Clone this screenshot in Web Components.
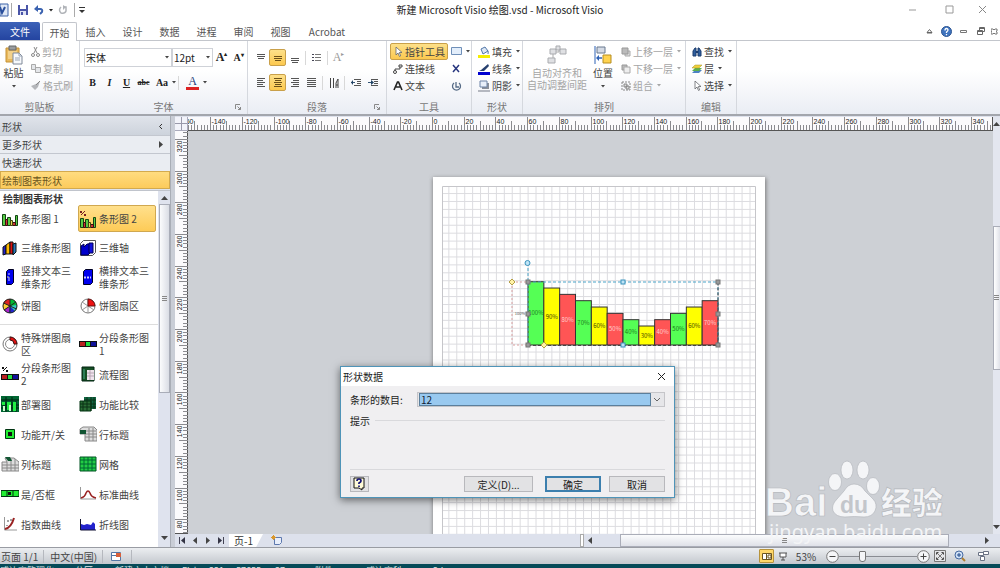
<!DOCTYPE html>
<html lang="zh-CN">
<head>
<meta charset="utf-8">
<title>新建 Microsoft Visio 绘图.vsd - Microsoft Visio</title>
<style>
html,body{margin:0;height:100%}
body{font:10px/13px "Noto Sans CJK SC","Noto Sans",sans-serif;color:#444;overflow:hidden;background:#fff}
</style>
</head>
<body>
<visio-app></visio-app>
<script>
const ICONS = {
  // window and quick access
  visio:[9,14,'<path d="M0 1h8v12H0z" fill="#dfe8f6" stroke="#3d62a8"/><path d="M0 4l2 6 3-6" fill="none" stroke="#2a4f9c" stroke-width="2"/>'],
  save:[10,10,'<path d="M0 0h10v10H0z" fill="#4a55a8"/><path d="M2 0h6v4H2z" fill="#fff"/><path d="M2 6h6v4H2z" fill="#dfe3f5"/><path d="M3 7h2v3H3z" fill="#4a55a8"/>'],
  undo:[10,10,'<path d="M2 4h4q3 0 2 3l-2 2" fill="none" stroke="#3a62b0" stroke-width="2"/><path d="M0 4l4-4v7z" fill="#3a62b0"/>'],
  redo:[10,10,'<path d="M3 2Q0 5 3 8q4 1 5-2V2H5" fill="none" stroke="#b0b3b8" stroke-width="1.500"/><path d="M5 0v5L8 2z" fill="#b0b3b8"/>'],
  qat:[6,6,'<path d="M0 .5h6" stroke="#333"/><path d="M0 3h6L3 6z" fill="#333"/>'],
  caret:[4,3,'<path d="M0 0h4L2 2.500z" fill="currentColor"/>'],
  min:[9,9,'<path d="M1 5h7" stroke="#999"/>'],
  max:[9,9,'<path d="M1 1h7v7H1z" fill="none" stroke="#999"/>'],
  close:[9,9,'<path d="M1 1l7 7M8 1l-7 7" stroke="#888"/>'],
  xdark:[9,9,'<path d="M1 1l7 7M8 1l-7 7" stroke="#222"/>'],
  up:[7,6,'<path d="M1 4.500l2.500-3 2.500 3zM1 5h5" fill="none" stroke="#666"/>'],
  help:[11,11,'<circle cx="5.500" cy="5.500" r="5" fill="#3f74bf" stroke="#2d5591"/><path d="M4 4.500q0-2 1.500-2t1.500 1.500q0 1-1.500 2V7M5.500 8v1.200" stroke="#fff" fill="none" stroke-width="1.300"/>'],
  mdimin:[8,6,'<path d="M.5 2.500h6v2h-6z" fill="#fff" stroke="#777"/>'],
  mdires:[8,8,'<path d="M2.500.5h5v4h-5zM.5 3.500h5v4h-5zM.5 4.500h5M2.500 1.500h5" fill="#fff" stroke="#666"/>'],
  mdiclose:[7,7,'<path d="M0 1h2l1 1 1-1h2v2L5 3.500 6 4v2H4L3 5 2 6H0V4l1-.5L0 3z" fill="#fff" stroke="#777"/>'],
  // clipboard
  paste:[18,20,'<path d="M1 3h13v14H1z" fill="#e9b95c" stroke="#c69235"/><path d="M4 1h7v4H4z" fill="#999c9f" stroke="#666"/><path d="M3 6h9v8H3z" fill="#f3d18a"/><path d="M8 8h6l3 3v8H8z" fill="#f7f9fc" stroke="#7e8898"/><path d="M14 8v3h3M10 13h5M10 15h5" fill="none" stroke="#9aa5b5"/>'],
  cut:[9,10,'<path d="M3 0l3 6M6 0L3 6" stroke="#888"/><circle cx="2" cy="8" r="1.500" fill="none" stroke="#888"/><circle cx="7" cy="8" r="1.500" fill="none" stroke="#888"/>'],
  copy:[10,9,'<path d="M.5.5h4v5h-4zM4.500 3.500h5v5h-5z" fill="#e5e7ea" stroke="#aaa"/>'],
  brush:[10,9,'<path d="M9 0L5 3 0 5l4 4 3-3z" fill="#b4b6ba"/><path d="M9 0L5 4" stroke="#888"/>'],
  // paragraph
  top:[10,10,'<path d="M1 1.500h8M1 3.500h8M2 5.500h6" stroke="#555"/>'],
  mid:[10,10,'<path d="M1 3.500h8M1 5.500h8M2 7.500h6" stroke="#6b5018"/>'],
  bot:[10,10,'<path d="M1 5.500h8M1 7.500h8M2 9.500h6" stroke="#555"/>'],
  left:[10,9,'<path d="M1 .5h8M1 2.500h6M1 4.500h8M1 6.500h6M1 8.500h8" stroke="#555"/>'],
  center:[10,9,'<path d="M1 .5h8M2 2.500h6M1 4.500h8M2 6.500h6M1 8.500h8" stroke="#6b5018"/>'],
  right:[10,9,'<path d="M1 .5h8M3 2.500h6M1 4.500h8M3 6.500h6M1 8.500h8" stroke="#555"/>'],
  just:[10,9,'<path d="M0 .5h9M0 2.500h9M0 4.500h9M0 6.500h9M0 8.500h9" stroke="#555"/>'],
  list:[9,9,'<path d="M3 1.500h6M3 4.500h6M3 7.500h6" stroke="#777"/><path d="M0 1.500h2M0 4.500h2M0 7.500h2" stroke="#445"/>'],
  vert:[10,10,'<path d="M1.500 0v10M4.500 0v10M7 10V5l2-4v9M7 7h2" stroke="#444" fill="none"/>'],
  outd:[10,9,'<path d="M3 1.500h7M6 3.500h4M6 5.500h4M3 7.500h7" stroke="#555"/><path d="M0 4.500h4" stroke="#357"/><path d="M2 2v5L0 4.500z" fill="#246"/>'],
  ind:[10,9,'<path d="M3 1.500h7M6 3.500h4M6 5.500h4M3 7.500h7" stroke="#555"/><path d="M0 4.500h4" stroke="#357"/><path d="M3 2v5l3-2.500z" fill="#246"/>'],
  // tools
  pointer:[10,10,'<path d="M3 0v8l2-2 1.500 3.500 1.200-.6L6.300 5.500H9z" fill="#fff" stroke="#66686c" stroke-width=".8"/>'],
  conn:[10,10,'<path d="M2 8V5h5V2" fill="none" stroke="#444"/><circle cx="2" cy="8" r="1.500" fill="#fff" stroke="#444"/><path d="M6 1h3v2H6z" fill="#fff" stroke="#444"/>'],
  text:[10,10,'<path d="M1 9l3.500-8h1L9 9M3 6h4" fill="none" stroke="#222" stroke-width="1.600"/>'],
  rect:[11,9,'<path d="M.5.5h10v7H.5z" fill="#e3eefb" stroke="#6f8fb8"/>'],
  cross:[11,9,'<path d="M2 1l6 7M8 1L2 8" stroke="#27367f" stroke-width="1.500"/>'],
  rotate:[11,10,'<path d="M8 2a4 4 0 1 1-5 0M5 1v5h3" fill="none" stroke="#566b86" stroke-width="1.300"/>'],
  fill:[12,12,'<path d="M3 3l4-2 3 4-5 3z" fill="#dde8f5" stroke="#5277a8"/><path d="M9 4q2 1 1 4" stroke="#5277a8" fill="none"/><path d="M0 9h12v3H0z" fill="#f5ee00"/>'],
  line:[12,12,'<path d="M10 1L3 7l-2 1 5 0 5-5z" fill="#27406f"/><path d="M0 9h12v3H0z" fill="#0000d0"/>'],
  shadow:[12,12,'<path d="M4 3h7v6H4z" fill="#8a8f99"/><path d="M2 1h7v6H2z" fill="#e8effa" stroke="#6d83a6"/><path d="M0 10h12v2H0z" fill="#b5b8c0"/>'],
  auto:[20,20,'<path d="M6 7h6M6 9v5M12 7V3" fill="none" stroke="#aaa"/><path d="M3 4h6v5H3zM1 13h7v5H1zM13 4h6v5h-6zM9 1h4v4H9z" fill="#dfe0e3" stroke="#a9abaf"/>'],
  pos:[18,20,'<path d="M1 1v18" stroke="#2f62b5"/><path d="M3 2h8v6H3z" fill="#d5dbe5" stroke="#69798f"/><path d="M3 13h5" stroke="#2f62b5" stroke-width="1.500"/><path d="M2 13l3-3v6z" fill="#2f62b5"/><path d="M9 10h8v8H9z" fill="#ffd34f" stroke="#b58d22"/>'],
  front:[10,10,'<path d="M4 4h5v5H4z" fill="#ddd" stroke="#aaa"/><path d="M1 1h6v6H1z" fill="#bbb" stroke="#999"/>'],
  back:[10,10,'<path d="M1 1h5v5H1z" fill="#bbb" stroke="#999"/><path d="M3 3h6v6H3z" fill="#eee" stroke="#aaa"/>'],
  group:[10,10,'<path d="M1 1h8v8H1z" fill="none" stroke="#888" stroke-dasharray="2 1"/><path d="M3 3h3v3H3zM5 5h3v3H5z" fill="#ddd" stroke="#888"/>'],
  find:[10,10,'<path d="M1 9V4l2-3h1v8zM6 9V1h1l2 3v5z" fill="#2f5f9f" stroke="#1d3d6d"/><path d="M4 5h2" stroke="#1d3d6d" stroke-width="2"/>'],
  layer:[10,10,'<path d="M3 6h7L7 9H0z" fill="#4d83c4"/><path d="M3 4h7L7 7H0z" fill="#5db04c"/><path d="M3 1h7L7 4H0z" fill="#f0d13c" stroke="#a69124" stroke-width=".5"/>'],
  launch:[6,6,'<path d="M.5 5V.5H5M2.500 2.500l3 3M5.500 3v2.500H3" fill="none" stroke="#888"/>'],
  chevl:[5,7,'<path d="M4 1L1.500 3.500 4 6" fill="none" stroke="#333"/>'],
  trir:[4,7,'<path d="M0 0v7l4-3.500z" fill="#444"/>'],
  tril:[4,7,'<path d="M4 0v7L0 3.500z" fill="#444"/>'],
  triu:[7,4,'<path d="M0 4h7L3.500 0z" fill="#444"/>'],
  trid:[7,4,'<path d="M0 0h7L3.500 4z" fill="#444"/>'],
  first:[6,7,'<path d="M.5 0v7" stroke="#445"/><path d="M6 0v7L2 3.500z" fill="#334"/>'],
  last:[6,7,'<path d="M5.500 0v7" stroke="#445"/><path d="M0 0v7l4-3.500z" fill="#334"/>'],
  grip:[5,5,'<path d="M0 .5h5M0 2.500h5M0 4.500h5" stroke="#888"/>'],
  // stencil masters
  bar1:[18,16,'<path d="M1.500 3.500h3v11h-3zM6.500 6.500h3v8h-3zM14.500 4.500h2v10h-2z" fill="#5c4" stroke="#141"/><path d="M4.500 8.500h2v6h-2zM11.500 11.500h3v3h-3z" fill="#c33" stroke="#311"/><path d="M9.500 9.500h2v5h-2z" fill="#dd5" stroke="#441"/>'],
  bar2:[18,18,'<path d="M1.500 8.500h3v9h-3zM6.500 9.500h3v8h-3zM14.500 7.500h2v10h-2z" fill="#5c4" stroke="#141"/><path d="M4.500 12.500h2v5h-2zM11.500 14.500h3v3h-3z" fill="#c33" stroke="#311"/><path d="M9.500 12.500h2v5h-2z" fill="#dd5" stroke="#441"/><path d="M2 5l4-4" stroke="#722"/><path d="M1 1h2v2H1zM5 4h2v2H5z" fill="#722"/>'],
  bar3d:[18,16,'<path d="M2 7l3-2v9l-3 1z" fill="#22c" stroke="#111"/><path d="M5 5l4-3v12H5z" fill="#fb0" stroke="#111"/><path d="M9 2h3v12H9z" fill="#d11" stroke="#111"/><path d="M12 4l3-1v9l-3 3z" fill="#27b" stroke="#111"/>'],
  axis3d:[18,16,'<path d="M4.500.5h12v12l-3 3h-12v-12z" fill="#fff" stroke="#555"/><path d="M2 6l3-2v3l3-3h3v9l-2 2H2z" fill="#00c" stroke="#005"/><path d="M10 3h4v10h-4z" fill="#11d" stroke="#005"/>'],
  v3d:[16,16,'<path d="M4.500 2.500l2-2h5v13l-2 2h-5z" fill="#00e" stroke="#002"/><path d="M6 5h2M6 7v2h2M6 11h2" stroke="#ccf"/>'],
  h3d:[16,16,'<path d="M3.500 2.500l2-2h7v13l-2 2h-7z" fill="#00e" stroke="#002"/><path d="M4 8.500h7" stroke="#ccf" stroke-width="2" stroke-dasharray="2 1"/>'],
  pie:[16,16,'<circle cx="8" cy="8" r="7" fill="#0b3"/><path d="M8 8V1A7 7 0 0 0 1.500 5z" fill="#d22"/><path d="M8 8L1.500 5A7 7 0 0 0 2 12z" fill="#fc3"/><path d="M8 8l-6 4a7 7 0 0 0 5 3z" fill="#a2c"/><path d="M8 8l-1 7a7 7 0 0 0 6-2z" fill="#22c"/><path d="M8 8l5 5a7 7 0 0 0 2-6z" fill="#3cc"/><circle cx="8" cy="8" r="7" fill="none" stroke="#222"/><path d="M8 1v14M1.500 5l13 6M2 12L14 4" stroke="#222"/>'],
  slice:[16,16,'<circle cx="8" cy="8" r="7" fill="#fff" stroke="#777"/><path d="M8 1v14M8 8L2 4M8 8l-6 4M8 8l6 4" stroke="#999"/><path d="M8 8V1a7 7 0 0 1 7 7z" fill="#e11" stroke="#611"/>'],
  ring:[16,16,'<circle cx="8" cy="8" r="7" fill="#fff" stroke="#777"/><circle cx="8" cy="8" r="4.500" fill="#fff" stroke="#888"/><path d="M8 1a7 7 0 0 1 7 7h-3a4 4 0 0 0-4-4z" fill="#d11" stroke="#411"/>'],
  seg:[18,16,'<path d="M0 5h18v6H0z" fill="#111"/><path d="M1 6h5v4H1z" fill="#b22"/><path d="M7 6h4v4H7z" fill="#2d4"/><path d="M12 6h5v4h-5z" fill="#119"/>'],
  seg2:[18,16,'<path d="M0 8h18v6H0z" fill="#111"/><path d="M1 9h5v4H1z" fill="#b22"/><path d="M7 9h4v4H7z" fill="#2d4"/><path d="M12 9h5v4h-5z" fill="#119"/><path d="M2 5l4-4" stroke="#111"/><path d="M1 1h2v2H1zM5 4h2v2H5z" fill="#111"/>'],
  proc:[16,16,'<path d="M2 1h12v14H2z" fill="#164f24" stroke="#021"/><path d="M7 4h7v10H7z" fill="#efe4ec"/><path d="M7 7h7M7 10h7M10 4v10" stroke="#b9a5b5"/><path d="M4 3v10" stroke="#4a8"/>'],
  deploy:[18,16,'<path d="M0 0h18v16H0z" fill="#063"/><path d="M0 4h18M5 1v15M11 1v15M15 5v11M0 9h18M0 12h18" stroke="#021"/><path d="M1 6h3v3H1zM6 6h4v8H6zM12 6h3v9h-3z" fill="#2e4"/><path d="M2 10h2v5H2zM8 9h2v6H8z" fill="#cfc"/>'],
  compare:[18,16,'<path d="M5 1h12v12H5z" fill="#164"/><path d="M1 5h11v10H1z" fill="#2a6d35" stroke="#031"/><path d="M1 8h16M1 11h16M4 5v10M8 1v14M12 1v14M15 1v12M5 4h12" stroke="#0a3316"/>'],
  onoff:[18,16,'<path d="M4.500 3.500h9v9h-9z" fill="#2e3" stroke="#031"/><path d="M7 6h4v4H7z" fill="#111"/>'],
  rowt:[18,16,'<path d="M1 3l3-2h11l3 3v11H6V8H1z" fill="#ddd" stroke="#888"/><path d="M1 5h16M6 8h12M6 11h12M10 2v13M14 2v13" stroke="#888"/><path d="M1 4h6v4H1z" fill="#153"/>'],
  colt:[18,16,'<path d="M1 6h5l-2-4h9l5 4v9H1z" fill="#ddd" stroke="#888"/><path d="M1 9h17M1 12h17M6 6v9M10 3v12M14 3v12" stroke="#888"/><path d="M4 1h5l2 4H7z" fill="#153"/>'],
  grid:[18,16,'<path d="M1 1h16v14H1z" fill="#2c4" stroke="#052"/><path d="M1 4h16M1 8h16M1 12h16M5 1v14M9 1v14M13 1v14" stroke="#063"/>'],
  yesno:[18,16,'<path d="M0 4.500h18v6H0z" fill="#2e3" stroke="#031"/><path d="M6 4v7M12 4v7" stroke="#031"/><path d="M7 6h3v3H7z" fill="#111"/>'],
  norm:[18,16,'<path d="M1.500 1v12H17" stroke="#999" fill="none"/><path d="M2 12q4-1 5-5 2-4 4 0 1 4 6 5" stroke="#922" stroke-width="1.500" fill="none"/>'],
  expo:[18,16,'<path d="M3.500 1v13H16" stroke="#999" fill="none"/><path d="M4 13q6-1 9-11" stroke="#922" stroke-width="2" fill="none"/><path d="M7 4v2M10 3v2M6 9v1" stroke="#444"/>'],
  area:[18,16,'<path d="M2 4v4l3 1 3-1 4 1 2-3 2 2v6H1V4z" fill="#22c"/><path d="M1.500 3v11H17" stroke="#113" fill="none"/>'],
  // status bar
  macro:[10,9,'<path d="M.5.5h9v8h-9z" fill="#fff" stroke="#5577a5"/><path d="M1 3.500h8" stroke="#5577a5"/><path d="M5 1h5v4H5z" fill="#d9603a"/>'],
  page:[10,9,'<path d="M.5 1.500h9v6h-9zM4.500 2v6M6 3h3v3H6z" fill="#fff" stroke="#6b5520"/>'],
  show:[10,9,'<path d="M1 1h8M2 1v4h6V1M5 5v3M3 8h4" fill="#fff" stroke="#555"/>'],
  minus:[13,13,'<circle cx="6.500" cy="6.500" r="5.800" fill="#f5f6f8" stroke="#777"/><path d="M3.500 6.500h6" stroke="#444"/>'],
  plus:[13,13,'<circle cx="6.500" cy="6.500" r="5.800" fill="#f5f6f8" stroke="#777"/><path d="M3.500 6.500h6M6.500 3.500v6" stroke="#444"/>'],
  fit:[12,12,'<path d="M.5.5h11v11H.5z" fill="#e4e5e8" stroke="#777"/><path d="M2 2h3L2 5zM10 2v3L7 2zM2 10V7l3 3zM10 10H7l3-3z" fill="#444"/><path d="M2 2l8 8M10 2l-8 8" stroke="#777"/>'],
  zoom:[12,12,'<circle cx="5" cy="5" r="4" fill="#cfe0f5" stroke="#4468a0"/><path d="M3 5h4M5 3v4" stroke="#234a8a"/><path d="M8 8l3 3" stroke="#b08030" stroke-width="2"/>'],
  wins:[11,10,'<path d="M5.500.5h5v3h-5zM.5 1.500h5v3h-5zM2.500 5.500h4v4h-4z" fill="#fff" stroke="#6a7284"/>'],
  newpage:[12,11,'<path d="M3.500 2.500h7v5l-2 2h-5z" fill="#e8eefa" stroke="#5d78ae"/><path d="M2.500 0v5M0 2.500h5M1 1l3 3M4 1L1 4" stroke="#d9982e"/>'],
  qmark:[13,14,'<path d="M1 1h10v10H9v2l-3-2H1z" fill="#fffbd8" stroke="#111"/><path d="M4 4q0-2 2-2t2 2q0 1-2 2v1M6 8.500V10" stroke="#117" stroke-width="1.700" fill="none"/>'],
  chevd:[8,6,'<path d="M1 1l3 3 3-3" fill="none" stroke="#666"/>']
};
const ui = (name) => `<ui-icon name="${name}"></ui-icon>`;

// Base class: renders its css() and html() into an open shadow root.
class View extends HTMLElement {
  connectedCallback() {
    if (this.shadowRoot) return;
    this.attachShadow({mode:'open'}).innerHTML =
      `<style>*{box-sizing:border-box}button{font:inherit;color:inherit;background:none;border:0;padding:0;margin:0}${this.css()}</style>${this.html()}`;
  }
  css() { return ''; }
  html() { return '<slot></slot>'; }
  at(name) { return this.getAttribute(name) || ''; }
}

class UiIcon extends View {
  css() { return ':host{display:inline-flex;flex:none}svg{display:block}'; }
  html() {
    const [w,h,body] = ICONS[this.at('name')];
    return `<svg width="${w}" height="${h}" viewBox="0 0 ${w} ${h}" aria-hidden="true">${body}</svg>`;
  }
}

class TitleBar extends View {
  css() { return `:host{display:grid;grid-template-columns:1fr auto 1fr;height:22px;align-items:center;padding-bottom:4px;color:#222;background:#fff}
    .qat,.win{display:flex;align-items:center}.qat{padding-top:2px}.qat button,.win button{display:flex;justify-content:center}
    .qat button{width:16px}.qat i{width:1px;height:14px;background:#aaa;margin:0 3px 0 2px}.qat .c{width:7px}.qat .r{width:18px}
    .win{justify-content:flex-end}.win button{width:37px}.win button:last-child{width:32px;padding-right:4px}h1{font:inherit;margin:0}`; }
  html() { return `<div class="qat">${ui('visio')}<i></i><button aria-label="保存">${ui('save')}</button><button aria-label="撤消">${ui('undo')}</button><button class="c" aria-label="撤消列表">${ui('caret')}</button><button class="r" aria-label="重复">${ui('redo')}</button><i></i><button class="c" aria-label="自定义">${ui('qat')}</button></div>
    <h1>新建 Microsoft Visio 绘图.vsd - Microsoft Visio</h1>
    <div class="win"><button aria-label="最小化">${ui('min')}</button><button aria-label="最大化">${ui('max')}</button><button aria-label="关闭">${ui('close')}</button></div>`; }
}

class RibbonTabs extends View {
  css() { return `:host{display:flex;height:19px;align-items:stretch;background:#fff;border-bottom:1px solid #c3c6cc;color:#555}
    button{width:37px;text-align:center}.file{width:40px;background:linear-gradient(#3c62b8,#2444a0);color:#fff;margin-right:2px;border-radius:0 2px 0 0}
    .on{border:1px solid #c3c6cc;border-bottom:0;border-radius:2px 2px 0 0;background:#fff;margin-bottom:-1px;width:35px}
    .wide{width:56px}.mdi{display:flex;margin-left:auto}.mdi button{width:17px;display:flex;align-items:center;justify-content:center}.mdi button:last-child{width:11px}`; }
  html() { return `<button class="file">文件</button><button class="on">开始</button>${['插入','设计','数据','进程','审阅','视图'].map(t=>`<button>${t}</button>`).join('')}<button class="wide">Acrobat</button>
    <div class="mdi">${[['up','折叠功能区'],['help','帮助'],['mdimin','最小化窗口'],['mdires','还原窗口'],['mdiclose','关闭窗口']].map(([i,l])=>`<button aria-label="${l}">${ui(i)}</button>`).join('')}</div>`; }
}

class RibbonGroup extends View {
  css() { return `:host{display:flex;flex-direction:column;border-right:1px solid #d5d8de;height:100%;flex:none}
    .body{flex:1;display:flex;padding:2px 2px 0 3px}footer{display:grid;grid-template-columns:12px 1fr 12px;height:15px;align-items:center;text-align:center;color:#777}
    footer span{grid-column:2}`; }
  html() { return `<div class="body"><slot></slot></div><footer><span>${this.at('label')}</span>${this.hasAttribute('launcher')?ui('launch'):''}</footer>`; }
}

class RibbonButton extends View {
  css() { return `:host{display:flex;flex:none}button{display:flex;align-items:center;height:17px;gap:2px;padding:0 2px;white-space:nowrap;border:1px solid transparent;border-radius:2px}
    :host([active]) button{background:linear-gradient(#fde08a,#fcc94f);border-color:#c9a04a}
    :host([off]) button{color:#a5a5a5}
    :host([large]) button{flex-direction:column;flex:1;height:55px;gap:2px;justify-content:flex-start;line-height:12px;white-space:pre;text-align:center;padding:2px 0 0;border:0}
    :host([tool]) button{width:17px;justify-content:center;padding:0}
    .c{margin-left:2px;display:flex}:host([large]) .c{margin:4px 0 0}`; }
  html() { const t = this.textContent.trim().replace(/\|/g,'\n');
    return `<button ${this.at('hint')?`aria-label="${this.at('hint')}"`:''}>${this.at('icon')?ui(this.at('icon')):''}${t?`<span>${t}</span>`:''}${this.hasAttribute('caret')?`<span class="c">${ui('caret')}</span>`:''}</button>`; }
}

class DropBox extends View {
  css() { return `:host{display:grid;align-items:center}select{grid-area:1/1;appearance:none;font:inherit;color:#222;width:100%;height:19px;border:1px solid #cfd2d8;background:#fff;padding:0 0 0 1px;margin:0;border-radius:0}
    ui-icon{grid-area:1/1;justify-self:end;margin-right:3px;pointer-events:none}`; }
  html() { return `<select aria-label="${this.at('hint')}"><option>${this.at('value')}</option></select>${ui('caret')}`; }
}

class AppRibbon extends View {
  css() { return `:host{display:flex;height:75px;background:linear-gradient(#fff 40%,#eaedf4);border-bottom:2px solid #a3a6ad}
    .col{display:flex;flex-direction:column}.row{display:flex;align-items:center;height:25px}.fonts{padding:2px 0 0 1px}
    .sep{width:1px;height:14px;background:#d8d8d8;margin:0 2px}
    .glyph{width:17px;height:17px;font:bold 10px/17px "Liberation Serif",serif;color:#222;text-align:center;white-space:nowrap}
    .i{font-style:italic}.u{text-decoration:underline}.s{font-size:8px;text-decoration:line-through}.big{font-size:12px}
    .colour{font-size:12px;font-weight:normal;color:#27407a;border-bottom:3px solid #d22;width:13px;height:15px;line-height:13px;margin:0 4px 0 5px}.grey{color:#999;font-weight:normal;font-size:12px}
    sup{font-size:6px;line-height:0}.cf{width:88px}.cs{width:41px}.aa{width:20px}.auto{width:62px}.posb{width:30px}.paste{width:21px}.clip{padding-left:4px}`; }
  html() { return `
  <ribbon-group label="剪贴板" style="width:80px"><ribbon-button class="paste" large caret icon="paste">粘贴</ribbon-button>
    <div class="col clip"><ribbon-button off icon="cut">剪切</ribbon-button><ribbon-button off icon="copy">复制</ribbon-button><ribbon-button off icon="brush">格式刷</ribbon-button></div></ribbon-group>
  <ribbon-group label="字体" launcher style="width:168px"><div class="col fonts">
    <div class="row"><drop-box class="cf" hint="字体" value="宋体"></drop-box><drop-box class="cs" hint="字号" value="12pt"></drop-box><button class="glyph big" aria-label="增大字号">A<sup>▴</sup></button><button class="glyph" aria-label="减小字号">A<sup>▾</sup></button></div>
    <div class="row"><button class="glyph">B</button><button class="glyph i">I</button><button class="glyph u">U</button><button class="glyph s">abc</button><button class="glyph aa">Aa</button>${ui('caret')}<span class="sep"></span><button class="glyph colour">A</button>${ui('caret')}</div></div></ribbon-group>
  <ribbon-group label="段落" launcher style="width:139px"><div class="col fonts">
    <div class="row"><ribbon-button tool icon="top" hint="顶端对齐"></ribbon-button><ribbon-button tool active icon="mid" hint="中部对齐"></ribbon-button><ribbon-button tool icon="bot" hint="底端对齐"></ribbon-button><span class="sep"></span><ribbon-button tool icon="list" hint="项目符号"></ribbon-button><span class="sep"></span><button class="glyph grey" aria-label="旋转文字">A<sup>▸</sup></button></div>
    <div class="row"><ribbon-button tool icon="left" hint="左对齐"></ribbon-button><ribbon-button tool active icon="center" hint="居中"></ribbon-button><ribbon-button tool icon="right" hint="右对齐"></ribbon-button><ribbon-button tool icon="just" hint="两端对齐"></ribbon-button><span class="sep"></span><ribbon-button tool icon="vert" hint="文字方向"></ribbon-button><span class="sep"></span><ribbon-button tool icon="outd" hint="减少缩进"></ribbon-button><ribbon-button tool icon="ind" hint="增加缩进"></ribbon-button></div></div></ribbon-group>
  <ribbon-group label="工具" style="width:85px"><div class="col"><ribbon-button active icon="pointer">指针工具</ribbon-button><ribbon-button icon="conn">连接线</ribbon-button><ribbon-button icon="text">文本</ribbon-button></div>
    <div class="col"><ribbon-button icon="rect" caret hint="矩形"></ribbon-button><ribbon-button icon="cross" hint="连接点"></ribbon-button><ribbon-button icon="rotate" hint="文本块"></ribbon-button></div></ribbon-group>
  <ribbon-group label="形状" style="width:51px"><div class="col"><ribbon-button icon="fill" caret>填充</ribbon-button><ribbon-button icon="line" caret>线条</ribbon-button><ribbon-button icon="shadow" caret>阴影</ribbon-button></div></ribbon-group>
  <ribbon-group label="排列" style="width:163px"><ribbon-button class="auto" large off icon="auto">自动对齐和|自动调整间距</ribbon-button><ribbon-button large caret class="posb" icon="pos">位置</ribbon-button>
    <div class="col"><ribbon-button off caret icon="front">上移一层</ribbon-button><ribbon-button off caret icon="back">下移一层</ribbon-button><ribbon-button off caret icon="group">组合</ribbon-button></div></ribbon-group>
  <ribbon-group label="编辑" style="width:51px"><div class="col"><ribbon-button caret icon="find">查找</ribbon-button><ribbon-button caret icon="layer">层</ribbon-button><ribbon-button caret icon="pointer">选择</ribbon-button></div></ribbon-group>`; }
}

class ShapeItem extends View {
  css() { return `:host{display:flex;min-width:0}button{flex:1;display:grid;grid-template-columns:18px 1fr;gap:2px;align-items:center;justify-items:center;text-align:left;padding:0 0 0 1px;border:1px solid transparent;border-left:0}
    span{justify-self:start}:host([active]) button{background:linear-gradient(#ffe08c,#fdcb57);border:1px solid #d0a850;border-radius:2px;margin:1px 0;padding-left:0}`; }
  html() { return `<button>${ui(this.at('icon'))}<span>${this.textContent}</span></button>`; }
}

class ShapesPane extends View {
  css() { return `:host{display:flex;flex-direction:column;min-height:0;background:#dfe4ee;border-right:1px solid #a9adb6;padding-top:1px}
    header,.bar{display:flex;justify-content:space-between;align-items:center;height:18px;padding:0 7px 0 2px;width:100%;text-align:left}
    header{background:linear-gradient(#dfe3ea,#cdd3dc)}.bar{background:#eaedf2;border-top:1px solid #c3c7cf}
    .gold{background:linear-gradient(#ffdc80,#fccb5c);border:1px solid #d3aa4e;color:#6a5520;padding-left:1px}
    .list{flex:1;min-height:0;display:grid;grid-template-columns:1fr 12px;margin-top:1px;border-top:1px solid #c0c4cc}
    .scroll{background:#fff;overflow:hidden;display:flex;flex-direction:column}h2{font:bold 10px/15px "Noto Sans CJK SC",sans-serif;color:#333;margin:0 0 -2px;padding-left:3px}
    .set{display:grid;grid-template-columns:78px 78px;grid-auto-rows:29px}.set+.set{grid-auto-rows:30px;border-top:1px solid #ddd;margin-top:4px;padding-top:4px}
    .sb{display:flex;flex-direction:column;align-items:center;justify-content:space-between;background:#dfe3ee;padding:5px 0 7px}
    .thumb{flex:0 1 189px;width:11px;background:linear-gradient(90deg,#fbfcfd,#dadde5);border:1px solid #a9adb8;display:flex;align-items:center;justify-content:center;margin:4px 0 auto}`; }
  html() {
    const a=[['bar1','条形图 1'],['bar2','条形图 2',1],['bar3d','三维条形图'],['axis3d','三维轴'],['v3d','竖排文本三维条形'],['h3d','横排文本三维条形'],['pie','饼图'],['slice','饼图扇区']];
    const b=[['ring','特殊饼图扇区'],['seg','分段条形图 1'],['seg2','分段条形图 2'],['proc','流程图'],['deploy','部署图'],['compare','功能比较'],['onoff','功能开/关'],['rowt','行标题'],['colt','列标题'],['grid','网格'],['yesno','是/否框'],['norm','标准曲线'],['expo','指数曲线'],['area','折线图']];
    const items = l => `<div class="set">${l.map(([i,t,on])=>`<shape-item icon="${i}"${on?' active':''}>${t}</shape-item>`).join('')}</div>`;
    return `<header><span>形状</span>${ui('chevl')}</header><button class="bar"><span>更多形状</span>${ui('trir')}</button><button class="bar">快速形状</button><button class="bar gold">绘制图表形状</button>
    <div class="list"><div class="scroll"><h2>绘制图表形状</h2>${items(a)}${items(b)}</div><div class="sb">${ui('triu')}<div class="thumb">${ui('grip')}</div>${ui('trid')}</div></div>`; }
}

// Measuring strip: ticks every 2 units, long ones every 10, labels every 20.
const UNIT = 1.585;
class RulerStrip extends View {
  css() { return ':host{display:block;overflow:hidden;min-width:0;min-height:0;background:#fbfafc;box-shadow:inset -1px -1px #555}svg{display:block}text{font:7px "Liberation Sans",sans-serif;fill:#222}'; }
  html() {
    const v = this.hasAttribute('vertical'), zero = +this.at('zero'); let s='', t='';
    for (let n = v?-200:-160; n <= (v?326:1000); n += 2) {
      const p = Math.round(zero + (v?-n:n)*UNIT)+.5, d = n%20===0?0:n%10===0?4:8;
      s += v ? `M${d} ${p}H13` : `M${p} ${d}V13`;
      if (n%20===0) t += v ? `<text transform="translate(7 ${p+1}) rotate(-90)" text-anchor="end">${n}</text>` : `<text x="${p+1}" y="7">${n}</text>`;
    }
    return `<svg width="${v?13:1900}" height="${v?900:13}"><path d="${s}" stroke="#8b8b90" fill="none"/>${t}</svg>`;
  }
}

class DrawingCanvas extends View {
  css() { return ':host{display:block;overflow:hidden;background:#cdd0d5;min-width:0;min-height:0}svg{display:block;width:100%;height:100%}text{font:6px "Noto Sans CJK SC",sans-serif;text-anchor:middle}.dim{font-size:4px}'; }
  html() {
    const vals=[100,90,80,70,60,50,40,30,40,50,60,70], G='#5f5', Y='#ff0', R='#f55', cols=[G,Y,R,G,Y,R,G,Y,R,G,Y,R];
    const ink={[G]:'#1a7a1a',[Y]:'#444400',[R]:'#ffd0d0'};
    const w=190/12, base=168;
    const bars=vals.map((v,i)=>{const h=v*.633,x=95+i*w;return `<rect x="${x}" y="${base-h}" width="${w}" height="${h}" fill="${cols[i]}" stroke="#333"/>`}).join('')
      + vals.map((v,i)=>`<text x="${95+i*w+w/2}" y="${base-v*.633/2+2}" fill="${ink[cols[i]]}">${v}%</text>`).join('');
    const sq=(x,y,b)=>`<rect x="${x-2}" y="${y-2}" width="4" height="4" fill="${b?'#bfe3f5':'#999'}" stroke="${b?'#3a93bd':'#777'}"/>`;
    const dia=(x,y)=>`<path d="M${x-3} ${y}l3-3 3 3-3 3z" fill="#fff3a8" stroke="#b59f45"/>`;
    return `<svg role="img" aria-label="绘图页"><defs><pattern id="g" width="7.925" height="7.925" patternUnits="userSpaceOnUse" x="-.5" y=".2"><path d="M0 .5H8M.5 0V8" stroke="#dcdce0" fill="none"/></pattern><filter id="s"><feGaussianBlur stdDeviation="2"/></filter></defs>
    <g transform="translate(245 46)"><path d="M0 1h333v600H0z" fill="#777" filter="url(#s)"/><path d="M0 0h332v600H0z" fill="#fff"/>
    <path d="M9.500 9.500h313v600h-313z" fill="url(#g)" stroke="#c6c6ca"/>
    <path d="M79 105v63h16M79 105h16" fill="none" stroke="#d9a0a0" stroke-dasharray="2 2"/><text class="dim" x="87" y="138" fill="#555">100%</text>
    ${bars}
    <path d="M95 86v82M95 105h190v63" fill="none" stroke="#4aa3c8" stroke-dasharray="3 2"/><path d="M95 168.500h190v-63" fill="none" stroke="#444" stroke-dasharray="3 2"/>
    <circle cx="94.500" cy="86" r="2.500" fill="#bfe3f5" stroke="#3a93bd"/>
    ${sq(95,105)}${sq(95,137)}${sq(95,168)}${sq(285,105)}${sq(285,137)}${sq(285,168)}${sq(190,105,1)}${sq(190,168,1)}${dia(79,105)}${dia(111,168)}</g></svg>`; }
}

class PageTabs extends View {
  css() { return `:host{display:flex;align-items:stretch;background:#dde1ec;height:13px;color:#333}
    button{display:flex;align-items:center;justify-content:center;width:13px}.tab{width:34px;background:#fff;clip-path:polygon(0 0,100% 0,80% 100%,0 100%);padding-right:5px;margin-left:2px}
    .new{width:28px}.split{width:4px;background:#fff;border:1px solid #aaa;margin-left:auto}.hs{display:flex;align-items:center;width:calc(50% + 4px);padding:0 11px 0 4px}
    .thumb{height:13px;margin:0 36px 0 28px;flex:1;border:1px solid #aaadb8;background:linear-gradient(#fbfcfd,#dfe1e8);display:flex;align-items:center;justify-content:center}`; }
  html() { return `<button aria-label="首页">${ui('first')}</button><button aria-label="上一页">${ui('tril')}</button><button aria-label="下一页">${ui('trir')}</button><button aria-label="末页">${ui('last')}</button><button class="tab">页-1</button><button class="new" aria-label="插入页">${ui('newpage')}</button><i class="split"></i><div class="hs">${ui('tril')}<div class="thumb">${ui('grip')}</div>${ui('trir')}</div>`; }
}

class DrawingWindow extends View {
  css() { return `:host{display:grid;grid-template:14px 1fr 13px/13px 1fr 7px;min-width:0;min-height:0;background:#dde1ec;padding-top:1px}
    .corner{background:#f2f3fa;border:solid #aab;border-width:0 1px 1px 0;background-image:linear-gradient(#99a,#99a),linear-gradient(#99a,#99a);background-size:1px 100%,100% 1px;background-position:6px 0,0 6px;background-repeat:no-repeat}
    .sb{grid-area:1/3/3/4;display:flex;flex-direction:column;align-items:center;padding:5px 0;background:#e3e6ef;overflow:hidden}
    .sb span{flex:100 1 0}.thumb{flex:143 1 0;width:7px;border:1px solid #aaadb8;border-right:0;background:linear-gradient(90deg,#fff,#dfe1e8);display:flex;align-items:center}.sb .after{flex:156 1 0}
    page-tabs{grid-column:1/-1}`; }
  html() { return `<div class="corner"></div><ruler-strip zero="244"></ruler-strip><div class="sb">${ui('triu')}<span></span><div class="thumb">${ui('grip')}</div><span class="after"></span>${ui('trid')}</div>
    <ruler-strip vertical zero="515"></ruler-strip><drawing-canvas></drawing-canvas><page-tabs></page-tabs>`; }
}

class ShapeDialog extends View {
  css() { return `:host{display:flex;flex-direction:column;background:#f0eff1;border:1px solid #4f94b8;box-shadow:0 2px 8px #0008;color:#222}
    header{display:flex;justify-content:space-between;align-items:center;background:#fff;height:19px;padding:0 8px 0 2px}
    form{display:flex;flex-direction:column;flex:1;margin:0;padding:6px 9px 5px}
    .field{display:grid;grid-template-columns:67px 1fr;align-items:center}.combo{display:grid;align-items:center;border:1px solid #c5c5c9;background:#e6e6e9;height:15px}
    select{grid-area:1/1;appearance:none;font:inherit;line-height:11px;color:#123;background:#99c9ef;border:1px solid #5b7f9c;height:13px;width:calc(100% - 14px);padding:0 0 0 1px;margin:0 0 0 1px;border-radius:0}
    .combo ui-icon{grid-area:1/1;justify-self:end;margin-right:3px;pointer-events:none}
    fieldset{flex:1;border:0;border-top:1px solid #d9d9dc;border-bottom:1px solid #d9d9dc;margin:7px 0 6px;padding:0;min-width:0}legend{padding:0 5px 0 0;line-height:13px}
    .row{display:flex;gap:8px;height:16px}.row button{width:56px;border:1px solid #b8b8bc;background:#e2e2e4;line-height:13px}.row .q{width:19px;display:flex;justify-content:center;align-items:center;margin-right:auto}.row .def{width:69px;margin-right:4px}.row .ok{border:2px solid #3c7fae;line-height:11px}`; }
  html() { return `<header><span>形状数据</span><button aria-label="关闭">${ui('xdark')}</button></header>
    <form><div class="field"><label for="n">条形的数目:</label><div class="combo"><select id="n"><option>12</option></select>${ui('chevd')}</div></div>
    <fieldset><legend>提示</legend></fieldset>
    <div class="row"><button type="button" class="q" aria-label="帮助">${ui('qmark')}</button><button type="button" class="def">定义(D)...</button><button type="button" class="ok">确定</button><button type="button">取消</button></div></form>`; }
}

class StatusBar extends View {
  css() { return `:host{display:flex;align-items:center;height:17px;background:linear-gradient(#eceef1,#c4c8ce);border-top:1px solid #999ca3;color:#444}
    .cell{padding:0 5px 0 1px;border-right:1px solid #b5b8be;height:13px;display:flex;align-items:center}.cell+.cell{padding-left:6px}
    .cell.m{padding:0 10px 0 8px}.right{margin-left:auto;display:flex;align-items:center;padding-right:4px}.right button{display:flex;justify-content:center;align-items:center}
    .on{width:15px;height:14px;background:#ffd769;border:1px solid #b7933c;border-radius:1px}.show{width:18px}.pct{width:28px;margin-right:6px;text-align:center}.fit,.zoom{width:20px}.wins{width:26px}
    input{appearance:none;width:78px;height:11px;margin:0;background:linear-gradient(#8a8d93,#8a8d93) 0 5px/100% 1px no-repeat}
    input::-webkit-slider-thumb{appearance:none;width:7px;height:11px;background:#f4f5f7;border:1px solid #777;border-radius:1px 1px 3px 3px}`; }
  html() { return `<span class="cell">页面 1/1</span><span class="cell">中文(中国)</span><span class="cell m">${ui('macro')}</span>
    <div class="right"><button class="on" aria-label="普通视图">${ui('page')}</button><button class="show" aria-label="全屏显示">${ui('show')}</button><span class="pct">53%</span><button aria-label="缩小">${ui('minus')}</button><input type="range" aria-label="显示比例" min="0" max="100" value="28"><button aria-label="放大">${ui('plus')}</button><button class="fit" aria-label="适应窗口">${ui('fit')}</button><button class="zoom" aria-label="扫视和缩放">${ui('zoom')}</button><button class="wins" aria-label="切换窗口">${ui('wins')}</button></div>`; }
}

class DesktopStrip extends View {
  css() { return `:host{display:flex;height:4px;background:#064a58;overflow:hidden;color:#dfe8ea;font-size:9px;line-height:13px;white-space:pre}span{flex:none}`; }
  html() { return [['感边高管理化',75],['分区',40],['新建文本文档',67],['Fish',27],['321',27],['57655',39],['37',40],['附件',51],['感边高科',67],['2.j',20]].map(([t,w])=>`<span style="width:${w}px">${t}</span>`).join(''); }
}

class SiteMark extends View {
  css() { return `:host{display:block;pointer-events:none}svg{display:block}.b{font:bold 40px "Liberation Sans",sans-serif}.d{font:bold 23px "Liberation Sans",sans-serif;fill:#c3c6cb}.c{font:900 31px "Noto Sans CJK SC",sans-serif}.u{font:20px "Noto Sans",sans-serif}`; }
  html() { return `<svg width="185" height="92" viewBox="0 0 185 92" fill="#f4f5f7"><g stroke="#b5b8bd" stroke-width=".7"><text class="b" x="0" y="56">Bai</text><ellipse cx="70" cy="22" rx="6.500" ry="8.500"/><ellipse cx="82" cy="10" rx="6" ry="9"/><ellipse cx="98" cy="10" rx="6" ry="9"/><ellipse cx="108" cy="26" rx="6.500" ry="8.500"/><path d="M89 24q7 0 11 7l8 8q5 5 2 12-3 6-11 6-10-1-19 0-9 0-12-6-2-6 4-12l7-8q4-7 10-7z"/><text class="c" x="116" y="54">经验</text></g><text class="d" x="75" y="53">du</text><text class="u" x="4" y="79">jingyan.baidu.com</text></svg>`; }
}

class VisioApp extends View {
  css() { return `:host{display:flex;flex-direction:column;height:100vh;position:relative;overflow:hidden}
    main{flex:1;min-height:0;display:grid;grid-template-columns:171px 1fr;gap:4px;background:#c9cdd6}
    shape-dialog{position:absolute;left:340px;top:366px;width:335px;height:132px}
    site-mark{position:absolute;right:50px;bottom:16px}`; }
  html() { return `<title-bar></title-bar><ribbon-tabs></ribbon-tabs><app-ribbon></app-ribbon><main><shapes-pane></shapes-pane><drawing-window></drawing-window></main><status-bar></status-bar><desktop-strip></desktop-strip><shape-dialog role="dialog" aria-label="形状数据"></shape-dialog><site-mark></site-mark>`; }
}

Object.entries({'ui-icon':UiIcon,'title-bar':TitleBar,'ribbon-tabs':RibbonTabs,'ribbon-group':RibbonGroup,'ribbon-button':RibbonButton,'drop-box':DropBox,'app-ribbon':AppRibbon,'shape-item':ShapeItem,'shapes-pane':ShapesPane,'ruler-strip':RulerStrip,'drawing-canvas':DrawingCanvas,'page-tabs':PageTabs,'drawing-window':DrawingWindow,'shape-dialog':ShapeDialog,'status-bar':StatusBar,'desktop-strip':DesktopStrip,'site-mark':SiteMark,'visio-app':VisioApp})
  .forEach(([name, cls]) => customElements.define(name, cls));
</script>
</body>
</html>
